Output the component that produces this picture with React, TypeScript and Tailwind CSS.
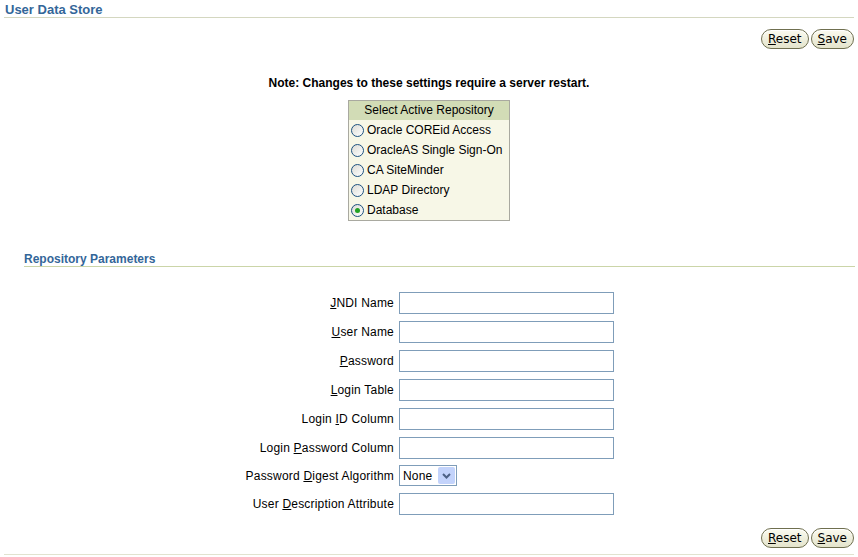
import React from 'react'

const repos = [
    'Oracle COREid Access',
    'OracleAS Single Sign-On',
    'CA SiteMinder',
    'LDAP Directory',
    'Database',
]

function Btn({ k, rest }: { k: string; rest: string }) {
    return (
        <button className="h-[20px] rounded-full border border-[#6f6f4f] bg-gradient-to-b from-[#fbfbf0] to-[#e4e4cc] px-[6px] font-['DejaVu_Sans'] text-[12px] leading-[16px] text-black shadow-[inset_0_1px_0_#ffffff]">
            <span className="underline">{k}</span>
            {rest}
        </button>
    )
}

function Buttons() {
    return (
        <div className="flex justify-end gap-[2px] pr-[4px]">
            <Btn k="R" rest="eset" />
            <Btn k="S" rest="ave" />
        </div>
    )
}

function Radio({ on }: { on?: boolean }) {
    return (
        <span className="flex h-[13px] w-[13px] items-center justify-center rounded-full border border-[#1c5180] bg-gradient-to-br from-[#dcdcd6] to-white">
            {on && <span className="h-[5px] w-[5px] rounded-full bg-[#22a222]" />}
        </span>
    )
}

function Field({ pre, k, post }: { pre: string; k: string; post: string }) {
    return (
        <span>
            {pre}
            <span className="underline">{k}</span>
            {post}
        </span>
    )
}

const fields: [string, string, string][] = [
    ['', 'J', 'NDI Name'],
    ['', 'U', 'ser Name'],
    ['', 'P', 'assword'],
    ['', 'L', 'ogin Table'],
    ['Login ', 'I', 'D Column'],
    ['Login ', 'P', 'assword Column'],
    ['Password ', 'D', 'igest Algorithm'],
    ['User ', 'D', 'escription Attribute'],
]

export default function App() {
    return (
        <div className="h-[557px] w-[858px] bg-white font-['Liberation_Sans',Arial,sans-serif] text-[12px] text-black">
            <div className="mx-[4px] h-[18px] border-b border-[#d4d7c0] pl-[1px] pt-[1px]">
                <span className="text-[13px] font-bold leading-[15px] text-[#336699]">
                    User Data Store
                </span>
            </div>

            <div className="mt-[11px]">
                <Buttons />
            </div>

            <div className="mt-[27px] text-center font-bold leading-[15px]">
                Note: Changes to these settings require a server restart.
            </div>

            <div className="mx-auto mt-[9px] w-[162px] border border-[#a9a9a0] bg-[#f7f7e7]">
                <div className="h-[19px] bg-[#d2dcb6] text-center leading-[19px]">
                    Select Active Repository
                </div>
                {repos.map((r, i) => (
                    <div key={r} className="flex h-[20px] items-center gap-[3px] pl-[2px]">
                        <Radio on={i === repos.length - 1} />
                        <span className="whitespace-nowrap">{r}</span>
                    </div>
                ))}
            </div>

            <div className="ml-[24px] mr-[3px] mt-[29px] border-b border-[#cbd5a8] pt-[2px] font-bold leading-[14px] text-[#336699]">
                Repository Parameters
            </div>

            <div className="mx-auto mt-[25px] grid w-fit grid-cols-[150px_215px] items-center gap-x-[5px] gap-y-[7px] tracking-[0.2px]">
                {fields.map(([pre, k, post], i) => (
                    <React.Fragment key={i}>
                        <div className="whitespace-nowrap text-right">
                            <Field pre={pre} k={k} post={post} />
                        </div>
                        {i === 6 ? (
                            <div className="-mt-[1px] flex h-[21px] w-[58px] items-center self-start border border-[#7f9db9] bg-white pl-[3px] pr-[1px]">
                                <span className="flex-1">None</span>
                                <span className="flex h-[17px] w-[17px] items-center justify-center rounded-[2px] bg-[#c3d3fb]">
                                    <svg width="9" height="6" viewBox="0 0 9 6">
                                        <path d="M1 1 L4.5 4.5 L8 1" fill="none" stroke="#4d6185" strokeWidth="2" />
                                    </svg>
                                </span>
                            </div>
                        ) : (
                            <div className="h-[22px] w-[215px] border border-[#7f9db9] bg-white" />
                        )}
                    </React.Fragment>
                ))}
            </div>

            <div className="mt-[13px]">
                <Buttons />
            </div>

            <div className="mx-[4px] mt-[6px] border-t border-[#e1e3cf]" />
        </div>
    )
}
